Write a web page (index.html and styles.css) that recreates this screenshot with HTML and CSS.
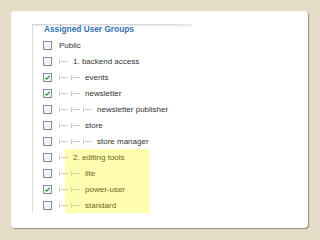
FILE: index.html
```html
<!DOCTYPE html>
<html lang="en">
<head>
  <meta charset="UTF-8" />
  <title>Assigned User Groups</title>
  <link rel="stylesheet" href="styles.css">
</head>
<body>
  <div class="card">
    <div class="groups">
      <div class="legend">Assigned User Groups</div>

      <div class="row"><span class="box"></span><span class="label">Public</span></div>
      <div class="row"><span class="box"></span><span class="lvl"></span><span class="label">1. backend access</span></div>
      <div class="row"><span class="box on"><svg viewBox="0 0 9 9"><path d="M1.8 4.6 L3.7 6.6 L7.2 2.2"/></svg></span><span class="lvl"></span><span class="lvl"></span><span class="label">events</span></div>
      <div class="row"><span class="box on"><svg viewBox="0 0 9 9"><path d="M1.8 4.6 L3.7 6.6 L7.2 2.2"/></svg></span><span class="lvl"></span><span class="lvl"></span><span class="label">newsletter</span></div>
      <div class="row"><span class="box"></span><span class="lvl"></span><span class="lvl"></span><span class="lvl"></span><span class="label">newsletter publisher</span></div>
      <div class="row"><span class="box"></span><span class="lvl"></span><span class="lvl"></span><span class="label">store</span></div>
      <div class="row"><span class="box"></span><span class="lvl"></span><span class="lvl"></span><span class="lvl"></span><span class="label">store manager</span></div>

      <!-- grupo resaltado -->
      <div class="hl">
        <div class="row"><span class="box"></span><span class="lvl"></span><span class="label">2. editing tools</span></div>
        <div class="row"><span class="box"></span><span class="lvl"></span><span class="lvl"></span><span class="label">lite</span></div>
        <div class="row"><span class="box on"><svg viewBox="0 0 9 9"><path d="M1.8 4.6 L3.7 6.6 L7.2 2.2"/></svg></span><span class="lvl"></span><span class="lvl"></span><span class="label">power-user</span></div>
        <div class="row"><span class="box"></span><span class="lvl"></span><span class="lvl"></span><span class="label">standard</span></div>
      </div>
    </div>
  </div>
</body>
</html>
```

FILE: styles.css
```css
* {
  box-sizing: border-box;
  margin: 0;
  padding: 0;
}

body {
  background: #e6ddc8;
  font-family: 'Liberation Sans', Arial, sans-serif;
  font-size: 8px;
  color: #333;
}

.card {
  margin: 11px;
  width: 297px;
  height: 217px;
  background: #fff;
  border-radius: 4px;
  box-shadow: 1px 1px 1px rgba(70, 60, 40, 0.5);
  padding: 13px 0 0 21px;
}

.groups {
  width: 160px;
  border-left: 1px solid #dcdcdc;
  padding-left: 10px;
  background:
    linear-gradient(to right, #d6d6d6, #d6d6d6 140px, #f2f2f2 160px) 0 0 / 100% 1px no-repeat,
    linear-gradient(#ececec, #fff) 0 1px / 100% 3px no-repeat;
  padding-top: 1px;
}

.legend {
  font-size: 8.3px;
  font-weight: bold;
  color: #3272b0;
  line-height: 9px;
  padding-left: 1px;
  margin-bottom: 3px;
}

.row {
  --line: #c9c9c9;
  display: flex;
  align-items: center;
  height: 16px;
  white-space: nowrap;
}

.box {
  width: 9px;
  height: 9px;
  border: 1px solid #7f90a8;
  background: linear-gradient(#fff, #e6eaf0);
  margin-right: 7px;
  flex: none;
}

.box svg {
  display: block;
  width: 7px;
  height: 7px;
}

.box path {
  fill: none;
  stroke: #2f9a2f;
  stroke-width: 1.4;
}

.lvl {
  width: 12px;
  height: 5px;
  flex: none;
  background:
    linear-gradient(var(--line), var(--line)) 0 0 / 1px 5px no-repeat,
    linear-gradient(var(--line), var(--line)) 2px 2px / 7px 1px no-repeat;
}

.lvl + .label {
  margin-left: 2px;
}

.hl {
  background: linear-gradient(to right, transparent 22px, #fffdb0 22px, #fffdb0 107px, transparent 107px);
}

.hl .row {
  --line: #d4d0a2;
  color: #6e6524;
}
```
